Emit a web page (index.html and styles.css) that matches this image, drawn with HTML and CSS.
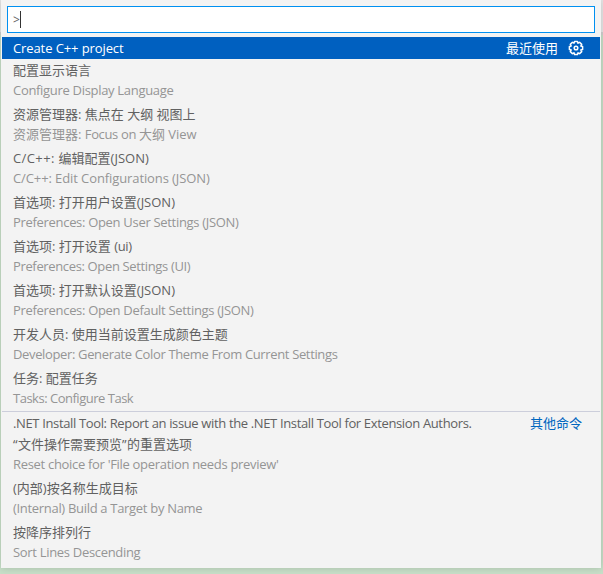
FILE: index.html
```html
<!DOCTYPE html>
<html lang="zh-CN">
<head>
<meta charset="utf-8">
<title>Command Palette</title>
<link rel="stylesheet" href="styles.css">
</head>
<body>
<main class="palette">
  <div class="search"><span class="prompt">&gt;</span><span class="caret"></span></div>
  <div class="list">
    <div class="row single selected">
      <span class="label snug">Create C++ project</span>
      <span class="group">最近使用</span>
      <svg class="gear" viewBox="0 0 16 16" fill="none" stroke="currentColor">
        <path stroke-width="1.5" stroke-linejoin="round" d="M6 3.2L6.5 1.4H9.5L10 3.2L11.6 2.3L13.7 4.4L12.8 6L14.6 6.5V9.5L12.8 10L13.7 11.6L11.6 13.7L10 12.8L9.5 14.6H6.5L6 12.8L4.4 13.7L2.3 11.6L3.2 10L1.4 9.5V6.5L3.2 6L2.3 4.4L4.4 2.3z"/>
        <circle cx="8" cy="8" r="1.8" stroke-width="1.5"/>
      </svg>
    </div>
    <div class="row"><span class="label">配置显示语言</span><span class="alias">Configure Display Language</span></div>
    <div class="row"><span class="label">资源管理器: 焦点在 大纲 视图上</span><span class="alias">资源管理器: <span class="tight">Focus on </span>大纲<span class="snug"> View</span></span></div>
    <div class="row"><span class="label"><span class="loose">C/C++: </span>编辑配置(JSON)</span><span class="alias snug">C/C++: Edit Configurations (JSON)</span></div>
    <div class="row"><span class="label">首选项: 打开用户设置(JSON)</span><span class="alias">Preferences: Open User Settings (JSON)</span></div>
    <div class="row"><span class="label">首选项: 打开设置 <span class="tight">(ui)</span></span><span class="alias tight">Preferences: Open Settings (UI)</span></div>
    <div class="row"><span class="label">首选项: 打开默认设置(JSON)</span><span class="alias">Preferences: Open Default Settings (JSON)</span></div>
    <div class="row"><span class="label">开发人员: 使用当前设置生成颜色主题</span><span class="alias tight">Developer: Generate Color Theme From Current Settings</span></div>
    <div class="row"><span class="label">任务: 配置任务</span><span class="alias tightest">Tasks: Configure Task</span></div>
    <div class="row single divided"><span class="label tight">.NET Install Tool: Report an issue with the .NET Install Tool for Extension Authors.</span><span class="group">其他命令</span></div>
    <div class="row"><span class="label"><span class="quote">“</span>文件操作需要预览<span class="quote">”</span>的重置选项</span><span class="alias">Reset choice for 'File operation needs preview'</span></div>
    <div class="row"><span class="label">(内部)按名称生成目标</span><span class="alias">(Internal) Build a Target by Name</span></div>
    <div class="row"><span class="label">按降序排列行</span><span class="alias">Sort Lines Descending</span></div>
  </div>
</main>
</body>
</html>
```
FILE: styles.css
```css
* { box-sizing: border-box; }
body {
  margin: 0;
  height: 574px;
  overflow: hidden;
  padding: 0 2px 0 1px;
  background: linear-gradient(#e6e6e6 0 32px, #d0d0d0 32px 35px, #c7dfc8 35px);
  font-family: "Open Sans", "Noto Sans CJK SC", sans-serif;
  font-size: 13px;
  color: #616161;
}
.palette {
  height: 568px;
  background: #f3f3f3;
  box-shadow: 0 0 8px rgba(0, 0, 0, .16);
  padding: 6px 0 0 1px;
}
.search {
  display: flex;
  align-items: center;
  width: 588px;
  height: 27px;
  margin-left: 5px;
  padding-left: 5px;
  background: #fff;
  border: 1px solid #0090f1;
}
.prompt { width: 7px; font-size: 12px; }
.caret { width: 1px; height: 17px; background: #333; }
.list { margin-top: 4px; }
.row {
  display: flex;
  flex-direction: column;
  height: 44px;
  padding-left: 11px;
  line-height: 22px;
  white-space: pre;
}
.alias { color: #959595; line-height: 18px; letter-spacing: -.31px; }
.alias:has(> .tight) { letter-spacing: 0; }
.tight { letter-spacing: -.355px; }
.tightest { letter-spacing: -.49px; }
.snug { letter-spacing: -.1px; }
.loose { letter-spacing: .4px; }
.single {
  flex-direction: row;
  align-items: center;
  height: 22px;
  width: 598px;
  padding-right: 16px;
}
.single .label { margin-right: auto; }
.selected { background: #0060c0; color: #fff; }
.gear { width: 16px; height: 16px; margin-left: 10px; }
.divided { border-top: 1px solid #cccedb; }
.divided .group { color: #0066bf; margin-right: 2px; }
.quote { font-family: "Open Sans", sans-serif; letter-spacing: .4px; }
```
